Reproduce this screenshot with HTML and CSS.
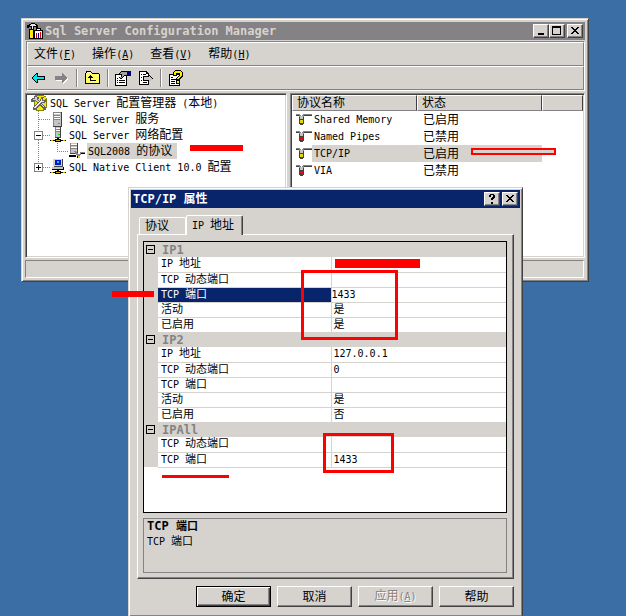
FILE: index.html
```html
<!DOCTYPE html>
<html lang="zh-CN">
<head>
    <meta charset="UTF-8">
    <meta name="viewport" content="width=device-width, initial-scale=1.0">
    <title>Sql Server Configuration Manager</title>
    <link rel="stylesheet" href="styles.css">
</head>
<body>

<!-- shared icons -->
<svg class="symbols" aria-hidden="true">
    <symbol id="icon-close" viewBox="0 0 12 10">
        <path d="M2 1h2v1h1v1h2V2h1V1h2v1H9v1H8v1H7v1h1v1h1v1h1v1H8V7H7V6H5v1H4v1H2V7h1V6h1V5h1V4H4V3H3V2H2z"/>
    </symbol>
    <symbol id="icon-server" viewBox="0 0 16 16">
        <path d="M3 1h9v15H3z" fill="#424142"/>
        <path d="M3 1h8v14H3z" fill="#c6c3c6"/>
        <path d="M3 1h8v1H3zM3 1h1v14H3z" fill="#848284"/>
        <path d="M4 2h6v1H4z" fill="#fff"/>
        <path d="M4 4h6v1H4zM4 6h6v1H4zM4 8h6v1H4z" fill="#848284"/>
        <path d="M4 5h6v1H4zM4 7h6v1H4z" fill="#fff"/>
        <path d="M8 12h2v1H8z" fill="#00e300"/>
    </symbol>
    <symbol id="icon-network" viewBox="0 0 16 16">
        <path d="M5 0h6v11H5z" fill="#424142"/>
        <path d="M5 0h5v10H5z" fill="#c6c3c6"/>
        <path d="M5 0h1v10H5zM6 2h4v1H6zM6 4h4v1H6z" fill="#848284"/>
        <path d="M6 1h4v1H6zM6 3h4v1H6z" fill="#fff"/>
        <path d="M8 7h2v1H8z" fill="#00e300"/>
        <path d="M7 11h2v1H7zM0 13h16v1H0zM5 12h6v3H5z" fill="#000"/>
        <path d="M1 13h2v1H1zM13 13h2v1h-2zM6 13h4v1H6z" fill="#c6b600"/>
    </symbol>
    <symbol id="icon-protocols" viewBox="0 0 16 16">
        <path d="M1 0h8v11H1z" fill="#424142"/>
        <path d="M1 0h7v10H1z" fill="#c6c3c6"/>
        <path d="M1 0h1v10H1zM2 2h6v1H2zM2 5h6v1H2z" fill="#848284"/>
        <path d="M2 1h6v1H2zM2 4h6v1H2z" fill="#fff"/>
        <path d="M0 12h7v2H0z" fill="#000"/>
        <path d="M6 9h2v1h1v1h2V9h5v1h-4v2h-1v1h-1v1H8v-2H7v-1H6z" fill="#848284"/>
        <path d="M12 10h4v1h-4zM8 13h1v2H8z" fill="#000"/>
        <path d="M9 13h2v2H9z" fill="#e7db00"/>
        <path d="M5 8h2v1H5z" fill="#00e300"/>
    </symbol>
    <symbol id="icon-client" viewBox="0 0 16 16">
        <path d="M4 0h9v8H4z" fill="#424142"/>
        <path d="M3 0h9v7H3z" fill="#d6d3ce"/>
        <path d="M5 1h6v5H5z" fill="#0018c8"/>
        <path d="M7 2h2v2H7z" fill="#00d0ff"/>
        <path d="M2 8h11l1 1v2H2z" fill="#c6c3c6"/>
        <path d="M2 10h12v1H2zM13 8h1v3h-1zM7 11h2v1H7zM0 13h16v1H0zM5 12h6v3H5z" fill="#000"/>
        <path d="M1 13h2v1H1zM13 13h2v1h-2zM6 13h4v1H6z" fill="#c6b600"/>
    </symbol>
    <symbol id="icon-pipe" viewBox="0 0 16 14">
        <path d="M0 1h4v1h1v1h1V2h1V1h9v1H8v2H7v2H4V4H3V2H0z" fill="#848284"/>
        <path d="M0 2h3v1H0zM8 2h8v1H8zM3 4h1v2H3zM7 4h1v2H7z" fill="#424142"/>
        <path d="M4 3h3v3H4z" fill="#c6c3c6"/>
        <path d="M3 6h5v5H3zM4 11h3v1H4z" fill="#424142"/>
        <path d="M4 7h3v3H4z" fill="currentColor"/>
    </symbol>
</svg>

<main class="desktop">

<section class="window manager">
    <header class="title-bar inactive">
        <svg class="app-icon" width="16" height="16" viewBox="0 0 16 16">
            <path d="M0 2h2V1h2V0h4v1h2v1h1v3H9V4H7v3H4V4H2v1H0z" fill="#000"/>
            <path d="M1 3h2V2h1V1h4v1h1v1H6v3H5V3z" fill="#e7e7e7"/>
            <path d="M2 6h5v10H2z" fill="#000"/>
            <path d="M3 7h3v8H3z" fill="#ffeb00"/>
            <path d="M7 7h9v9H7zM9 5h5v2H9z" fill="#000"/>
            <path d="M8 8h7v7H8zM10 6h3v1h-3z" fill="#fff"/>
            <path d="M9 10h1v5H9zM13 9h1v6h-1z" fill="#e00000"/>
            <path d="M11 10h1v5h-1z" fill="#0000c0"/>
        </svg>
        <h1>Sql Server Configuration Manager</h1>
        <div class="title-buttons">
            <button class="title-button" aria-label="最小化"><svg width="12" height="10" viewBox="0 0 12 10"><path d="M3 7h6v2H3z"/></svg></button>
            <button class="title-button" aria-label="最大化"><svg width="12" height="10" viewBox="0 0 12 10"><path d="M1 0h9v9H1zM2 2v6h7V2z" fill-rule="evenodd"/></svg></button>
            <button class="title-button close" aria-label="关闭"><svg width="12" height="10"><use href="#icon-close"/></svg></button>
        </div>
    </header>

    <div class="bars">
        <nav class="menu-bar">
            <a href="#file">文件<span class="en">(<u>F</u>)</span></a>
            <a href="#action">操作<span class="en">(<u>A</u>)</span></a>
            <a href="#view">查看<span class="en">(<u>V</u>)</span></a>
            <a href="#help">帮助<span class="en">(<u>H</u>)</span></a>
        </nav>
        <div class="toolbar">
            <button aria-label="后退"><svg width="16" height="16" viewBox="0 0 16 16"><path d="M1 8l4-4h1v3h7v2H6v3H5z" fill="#00e7ef"/><path d="M5 3h2v3h6v1H6V4H5v1H4v1H3v1H2v2h1v1h1v1h1v1h1V9h7v1H7v3H5v-1H4v-1H3v-1H2V9H1V7h1V6h1V5h1V4h1zM13 6h1v4h-1z"/></svg></button>
            <button aria-label="前进"><svg width="16" height="16" viewBox="0 0 16 16"><path d="M10 4h1v1h1v1h1v1h1v1h1v2h-1v1h-1v1h-1v1h-1v1h-1v-3H3v-1h7z" fill="#fff"/><path d="M9 3h1v1h1v1h1v1h1v1h1v2h-1v1h-1v1h-1v1h-1v1H9v-3H2V6h7z" fill="#848284"/></svg></button>
            <span class="separator"></span>
            <button aria-label="向上"><svg width="16" height="16" viewBox="0 0 16 16"><path d="M2 1h5v1h1v1h7v1h1v10H1V3h1z"/><path d="M3 2h4v1h1v1h7v9H2V3h1z" fill="#ffff63"/><path d="M3 2h4v1H3zM2 5h13v1H2z" fill="#fffbce"/><path d="M6 5h1v1h1v1h1v1H7v2h5v1H6V8H4V7h1V6h1z"/></svg></button>
            <span class="separator"></span>
            <button aria-label="属性"><svg width="16" height="16" viewBox="0 0 16 16"><path d="M0 4h12v12H0z"/><path d="M1 5h10v10H1z" fill="#fff"/><path d="M2 8h1v1H2zM2 10h1v1H2zM4 10h6v1H4zM2 12h1v1H2zM4 12h6v1H4z"/><path d="M4 4V3h1V2h1V1h7v5H9v1H8v1H7v1H5V8H4V7h2V5H4z"/><path d="M5 3h1V2h7v3H9v1H8v1H7v1H5V7h2V4H5z" fill="#a5a2a5"/><path d="M12 1h4v5h-4z" fill="#00007b"/></svg></button>
            <button aria-label="导出列表"><svg width="16" height="16" viewBox="0 0 16 16"><path d="M2 1h8v1h1v1h1v12H2z"/><path d="M3 2h6v2h2v10H3z" fill="#fff"/><path d="M4 4h1v1H4zM4 7h1v1H4zM4 10h1v1H4zM6 4h3v1H6zM6 12h4v1H6z"/><path d="M6 6h5V4h1v1h1v1h1v1h1v1h1v1h-1v1h-1v1h-1v1h-1v1h-1v-2H6z"/><path d="M7 7h5V6l3 3-3 3v-2H7z" fill="#c6c3c6"/></svg></button>
            <span class="separator"></span>
            <button aria-label="帮助"><svg width="16" height="16" viewBox="0 0 16 16"><path d="M1 4h11v12H1z"/><path d="M2 5h9v10H2z" fill="#fff"/><path d="M3 7h2v1H3zM3 9h5v1H3zM3 11h4v1H3zM3 13h4v1H3z"/><path d="M7 0h6v1h1v1h1v5h-1v1h-1v1h-1v5H8V8h1V7h1V6h1V4H9v2H5V2h1V1h1z"/><path d="M7 1h6v1h1v4h-1v1h-1v1h-1v1H9V8h1V7h1V6h1V3H8v2H6V2h1zM9 11h2v2H9z" fill="#ffeb00"/></svg></button>
        </div>
    </div>

    <div class="panes">
        <ul class="tree">
            <li>
                <svg width="16" height="16" viewBox="0 0 16 16"><path d="M4 0h9v1h2v2h1v10h-1v2h-2v1H5v-1H3V2h1z" fill="#848200"/><path d="M5 1h8v1h2v10h-1v2h-2v1H6v-2H4V3h1z" fill="#f7e700"/><path d="M0 4h1V3h2V1h3v1h2v2H7v1h1v1h1v1h1v1h1v1h1v1h1v1h1v1h1v3h-2v-1h-1v-1h-1v-1h-1v-1H9v-1H8V9H7V8H6V7H5V6H3v1H0z" fill="#636163"/><path d="M2 4h2V2h2v3h1v1h1v1h1v1h1v1h1v1h1v1h1v1h-1v-1h-1v-1h-1V9H8V8H7V7H6V6H5V5H2z" fill="#d6d3ce"/><path d="M10 2h3v1h-1v2h2V4h1v3h-1v1h-3v1h-1v1H9v1H8v1H7v1H6v1H5v1H2v-3h1v-1h1v-1h1V9h1V8h1V7h1V6h1V4h1z" fill="#636163"/><path d="M10 4h1v2h2v1h-3v1H9v1H8v1H7v1H6v1H5v1H3v-1h1v-1h1v-1h1V9h1V8h1V7h1V6h1z" fill="#efefef"/></svg>
                <span class="label"><span class="en">SQL Server </span>配置管理器<span class="en"> (</span>本地<span class="en">)</span></span>
            </li>
            <li>
                <svg class="lines" width="19" height="16"><path d="M7.5 0v16M8 8.5h11"/></svg>
                <svg width="16" height="16"><use href="#icon-server"/></svg>
                <span class="label"><span class="en">SQL Server </span>服务</span>
            </li>
            <li>
                <svg class="lines" width="19" height="16"><path d="M7.5 0v4M7.5 13v3M12 8.5h7"/><rect x="3.5" y="4.5" width="8" height="8"/><path class="sign" d="M5 8.5h5"/></svg>
                <svg width="16" height="16"><use href="#icon-network"/></svg>
                <span class="label"><span class="en">SQL Server </span>网络配置</span>
            </li>
            <li>
                <svg class="lines" width="19" height="16"><path d="M7.5 0v16"/></svg>
                <svg class="lines" width="19" height="16"><path d="M7.5 0v8.5h11"/></svg>
                <svg width="16" height="16"><use href="#icon-protocols"/></svg>
                <span class="label selected"><span class="en">SQL2008 </span>的协议</span>
            </li>
            <li>
                <svg class="lines" width="19" height="16"><path d="M7.5 0v4M12 8.5h7"/><rect x="3.5" y="4.5" width="8" height="8"/><path class="sign" d="M5 8.5h5M7.5 6v5"/></svg>
                <svg width="16" height="16"><use href="#icon-client"/></svg>
                <span class="label"><span class="en">SQL Native Client 10.0 </span>配置</span>
            </li>
        </ul>
        <div class="list">
            <table>
                <thead>
                    <tr><th class="name-col">协议名称</th><th class="state-col">状态</th><th></th></tr>
                </thead>
                <tbody>
                    <tr>
                        <td><div class="protocol"><svg class="on" width="16" height="14"><use href="#icon-pipe"/></svg><span class="en">Shared Memory</span></div></td>
                        <td>已启用</td><td></td>
                    </tr>
                    <tr>
                        <td><div class="protocol"><svg class="off" width="16" height="14"><use href="#icon-pipe"/></svg><span class="en">Named Pipes</span></div></td>
                        <td>已禁用</td><td></td>
                    </tr>
                    <tr class="selected">
                        <td><div class="protocol"><svg class="on" width="16" height="14"><use href="#icon-pipe"/></svg><span class="en">TCP/IP</span></div></td>
                        <td>已启用</td><td></td>
                    </tr>
                    <tr>
                        <td><div class="protocol"><svg class="off" width="16" height="14"><use href="#icon-pipe"/></svg><span class="en">VIA</span></div></td>
                        <td>已禁用</td><td></td>
                    </tr>
                </tbody>
            </table>
        </div>
    </div>
    <footer class="status-bar"></footer>
</section>

<section class="window dialog">
    <header class="title-bar">
        <h2>TCP/IP <span class="cn">属性</span></h2>
        <div class="title-buttons">
            <button class="title-button" aria-label="帮助"><svg width="12" height="10" viewBox="0 0 12 10"><path d="M3 1h1V0h4v1h1v3H8v1H7v1H5V4h1V3h1V1H5v2H3zM5 8h2v2H5z"/></svg></button>
            <button class="title-button close" aria-label="关闭"><svg width="12" height="10"><use href="#icon-close"/></svg></button>
        </div>
    </header>

    <div class="dialog-body">
        <div class="tabs" role="tablist">
            <button class="tab" role="tab">协议</button>
            <button class="tab active" role="tab" aria-selected="true"><span class="en">IP </span>地址</button>
        </div>
        <div class="tab-page">
            <div class="grid">
                <table>
                    <colgroup><col class="gutter"><col class="key"><col></colgroup>
                    <tbody>
                        <tr class="category"><th><button class="toggle" aria-label="折叠"></button></th><th colspan="2">IP1</th></tr>
                        <tr><th></th><td><span class="en">IP </span>地址</td><td></td></tr>
                        <tr><th></th><td><span class="en">TCP </span>动态端口</td><td></td></tr>
                        <tr class="current"><th></th><td><label for="port"><span class="en">TCP </span>端口</label></td><td><input id="port" type="text" value="1433"></td></tr>
                        <tr><th></th><td>活动</td><td>是</td></tr>
                        <tr><th></th><td>已启用</td><td>是</td></tr>
                        <tr class="category"><th><button class="toggle" aria-label="折叠"></button></th><th colspan="2">IP2</th></tr>
                        <tr><th></th><td><span class="en">IP </span>地址</td><td><span class="en">127.0.0.1</span></td></tr>
                        <tr><th></th><td><span class="en">TCP </span>动态端口</td><td><span class="en">0</span></td></tr>
                        <tr><th></th><td><span class="en">TCP </span>端口</td><td></td></tr>
                        <tr><th></th><td>活动</td><td>是</td></tr>
                        <tr><th></th><td>已启用</td><td>否</td></tr>
                        <tr class="category"><th><button class="toggle" aria-label="折叠"></button></th><th colspan="2">IPAll</th></tr>
                        <tr><th></th><td><span class="en">TCP </span>动态端口</td><td></td></tr>
                        <tr><th></th><td><span class="en">TCP </span>端口</td><td><span class="en">1433</span></td></tr>
                    </tbody>
                </table>
            </div>
            <div class="description">
                <h3>TCP <span class="cn">端口</span></h3>
                <p><span class="en">TCP </span>端口</p>
            </div>
        </div>
        <div class="actions">
            <button class="button default">确定</button>
            <button class="button">取消</button>
            <button class="button" disabled>应用<span class="en">(<u>A</u>)</span></button>
            <button class="button">帮助</button>
        </div>
    </div>
</section>

<!-- red marker pen -->
<span class="mark mark-tree"></span>
<span class="mark mark-protocol"></span>
<span class="mark mark-address"></span>
<span class="mark mark-row"></span>
<span class="mark mark-port"></span>
<span class="mark mark-all"></span>
<span class="mark mark-underline"></span>

</main>

</body>
</html>
```
FILE: styles.css
```css
* {
    box-sizing: border-box;
}

body {
    margin: 0;
    background-color: #3a6ea5;
    color: #000;
    font-family: "DejaVu Sans Mono", "Noto Sans CJK SC", monospace;
    font-size: 12px;
    line-height: 16px;
}

h1, h2, h3, p, ul {
    margin: 0;
    padding: 0;
}

button, input {
    margin: 0;
    padding: 0;
    color: inherit;
    font: inherit;
}

svg {
    display: block;
    flex: none;
    shape-rendering: crispEdges;
}

table {
    width: 100%;
    border-collapse: collapse;
    table-layout: fixed;
}

th, td {
    padding: 0;
    text-align: left;
    font-weight: normal;
}

.symbols {
    position: absolute;
    width: 0;
    height: 0;
}

/* latin text is half as wide as a chinese character */
.en {
    font-size: 10px;
    white-space: pre;
}

.desktop {
    position: relative;
    min-height: 100vh;
    overflow: hidden;
}

.window {
    position: absolute;
    background-color: #d6d3ce;
    border: 1px solid;
    border-color: #d6d3ce #424142 #424142 #d6d3ce;
    box-shadow: inset 1px 1px #fff, inset -1px -1px #848284;
}

.manager {
    top: 18px;
    left: 21px;
    right: 37px;
    padding: 3px;
}

.dialog {
    top: 187px;
    left: 128px;
    right: 103px;
    padding: 2px;
}

/* title bars */
.title-bar {
    display: flex;
    align-items: center;
    height: 18px;
    padding: 0 2px;
    background-color: #08246b;
    color: #fff;
}

.title-bar.inactive {
    background-color: #848284;
    color: #d6d3ce;
}

.app-icon {
    margin-right: 2px;
}

.title-bar h1,
.title-bar h2 {
    flex: 1;
    font-size: 12px;
    font-weight: bold;
    white-space: nowrap;
}

.title-buttons {
    display: flex;
}

.title-button {
    display: flex;
    align-items: center;
    justify-content: center;
    width: 16px;
    height: 14px;
    background-color: #d6d3ce;
    color: #000;
    border: 1px solid;
    border-color: #fff #424142 #424142 #fff;
    box-shadow: inset -1px -1px #848284;
}

.title-button.close {
    margin-left: 2px;
}

/* menu and toolbar */
.bars {
    margin: 1px 0 2px 1px;
    border: 1px solid;
    border-color: #848284 #fff #fff #848284;
}

.menu-bar,
.toolbar {
    display: flex;
    align-items: center;
    height: 24px;
    border: 1px solid;
    border-color: #fff #848284 #848284 #fff;
}

.menu-bar {
    gap: 16px;
    padding-left: 6px;
}

.menu-bar a {
    color: #000;
    text-decoration: none;
}

.toolbar button {
    display: flex;
    padding: 0 3px;
    background: none;
    border: none;
}

.separator {
    width: 2px;
    height: 18px;
    margin: 0 3px 0 4px;
    border-left: 1px solid #848284;
    border-right: 1px solid #fff;
}

/* panes */
.panes {
    display: grid;
    grid-template-columns: 262px 1fr;
    gap: 3px;
    min-height: 165px;
}

.tree,
.list {
    background-color: #fff;
    border: 1px solid;
    border-color: #848284 #fff #fff #848284;
    box-shadow: inset 1px 1px #424142, inset -1px -1px #d6d3ce;
}

.tree {
    padding: 1px 5px;
    list-style: none;
}

.tree li {
    display: flex;
    height: 16px;
    white-space: nowrap;
}

.tree .label {
    margin-left: 2px;
    padding: 0 1px;
}

.tree .selected {
    padding-right: 5px;
    background-color: #d6d3ce;
}

.lines {
    fill: none;
    stroke: #848284;
    stroke-dasharray: 1 1;
}

.lines rect {
    stroke-dasharray: none;
}

.lines .sign {
    stroke: #000;
    stroke-dasharray: none;
}

.list {
    padding: 1px;
}

.list th {
    height: 16px;
    padding-left: 4px;
    background-color: #d6d3ce;
    border: 1px solid;
    border-color: #fff #424142 #848284 #fff;
    line-height: 14px;
}

.list table {
    border-collapse: separate;
    border-spacing: 0;
}

.name-col,
.state-col {
    width: 125px;
}

.list td {
    height: 17px;
    padding-left: 6px;
}

.list td:first-child {
    padding-left: 4px;
}

.protocol {
    display: flex;
    align-items: center;
}

.protocol .en {
    flex: 1;
    padding-left: 2px;
    line-height: 17px;
}

.list .selected .en,
.list .selected td:nth-child(2) {
    background-color: #d6d3ce;
}

.on {
    color: #e7db00;
}

.off {
    color: #ff0000;
}

.status-bar {
    height: 18px;
    margin: 2px 1px 0 0;
    border: 1px solid;
    border-color: #848284 #fff #fff #848284;
}

/* properties dialog */
.dialog-body {
    padding: 7px 6px;
}

.tabs {
    display: flex;
    align-items: flex-end;
    padding-left: 2px;
}

.tab {
    width: 47px;
    height: 17px;
    background-color: #d6d3ce;
    border: 1px solid #fff;
    border-bottom: none;
    border-radius: 2px 2px 0 0;
    line-height: 16px;
    text-align: left;
    padding-left: 5px;
}

.tab.active {
    z-index: 1;
    width: 57px;
    height: 20px;
    margin-bottom: -1px;
    border-right-color: #424142;
    box-shadow: inset -1px 0 #848284;
}

.tab-page {
    padding: 6px 6px 5px 5px;
    border: 1px solid;
    border-color: #fff #424142 #424142 #fff;
    box-shadow: inset -1px -1px #848284;
}

.grid {
    min-height: 272px;
    background-color: #fff;
    border: 1px solid #000;
    font-size: 11px;
    line-height: 14px;
}

.gutter {
    width: 14px;
}

.key {
    width: 173px;
}

.grid th {
    background-color: #d6d3ce;
}

.grid td {
    height: 15px;
    padding-left: 3px;
    border-right: 1px solid #d6d3ce;
    border-bottom: 1px solid #d6d3ce;
}

.grid td:last-child {
    padding-left: 2px;
    border-right: none;
}

.grid .category th {
    height: 15px;
    padding-left: 4px;
    color: #848284;
    font-size: 12px;
    font-weight: bold;
}

.grid .category th:first-child {
    padding-left: 2px;
}

.toggle {
    display: block;
    width: 9px;
    height: 9px;
    background: linear-gradient(#000, #000) center / 5px 1px no-repeat;
    border: 1px solid #000;
}

.current td:nth-child(2) {
    background-color: #08246b;
    color: #fff;
}

.grid .current td:last-child {
    padding-left: 0;
}

.current input {
    display: block;
    width: 100%;
    height: 14px;
    border: none;
    background: none;
    font-size: 10px;
}

.description {
    height: 55px;
    margin-top: 5px;
    padding: 0 3px;
    border: 1px solid #848284;
    font-size: 11px;
    line-height: 15px;
}

.description h3 {
    font-size: 12px;
}

.description .cn {
    font-size: 11px;
}

.actions {
    display: flex;
    justify-content: flex-end;
    gap: 6px;
    padding-top: 7px;
}

.button {
    width: 75px;
    height: 21px;
    background-color: #d6d3ce;
    border: 1px solid;
    border-color: #fff #424142 #424142 #fff;
    box-shadow: inset -1px -1px #848284;
    line-height: 18px;
}

.button.default {
    border-color: #000;
    box-shadow: inset 1px 1px #fff, inset -1px -1px #424142, inset -2px -2px #848284;
}

.button:disabled {
    color: #848284;
    text-shadow: 1px 1px #fff;
}

/* marker strokes lie over the windows */
.mark {
    position: absolute;
    background-color: #ff0000;
}

.mark-tree {
    top: 145px;
    left: 190px;
    width: 53px;
    height: 6px;
}

.mark-protocol {
    top: 148px;
    left: 471px;
    width: 85px;
    height: 7px;
    border: 2px solid #ff0000;
    background-color: #d6d3ce;
}

.mark-address {
    top: 259px;
    left: 335px;
    width: 85px;
    height: 9px;
}

.mark-row {
    top: 291px;
    left: 112px;
    width: 42px;
    height: 6px;
}

.mark-port,
.mark-all {
    border: 3px solid #ff0000;
    background: none;
}

.mark-port {
    top: 270px;
    left: 301px;
    width: 97px;
    height: 70px;
}

.mark-all {
    top: 433px;
    left: 323px;
    width: 71px;
    height: 40px;
}

.mark-underline {
    top: 475px;
    left: 162px;
    width: 67px;
    height: 3px;
}
```
